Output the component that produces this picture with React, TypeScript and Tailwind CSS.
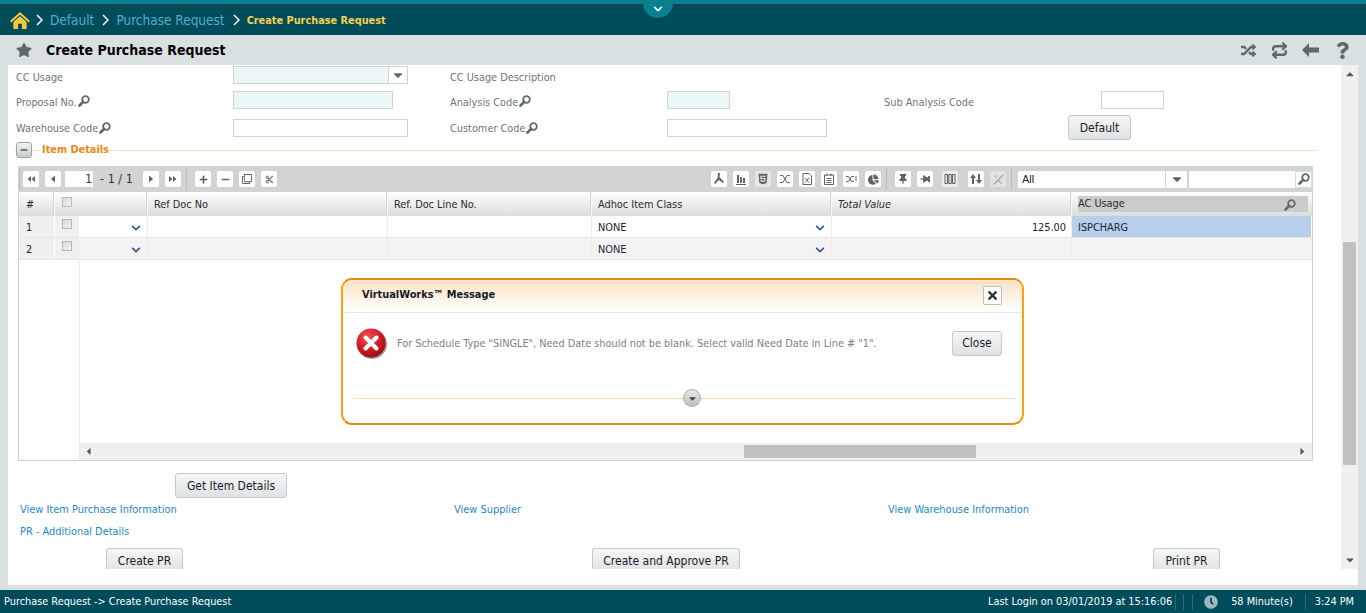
import React from "react";
import { FaStar, FaRandom, FaQuestion, FaHtml5, FaChartPie, FaThumbtack, FaPlus, FaMinus, FaRegClone, FaCut, FaChevronDown, FaCaretDown, FaCaretUp, FaCaretLeft, FaCaretRight, FaTimes, FaClock } from "react-icons/fa";
import { Repeat } from "lucide-react";

const KeySearch = ({ size = 12, className = "" }: { size?: number; className?: string }) => (
  <svg width={size} height={size} viewBox="0 0 12 12" className={className} fill="none" stroke="currentColor">
    <circle cx="7.500" cy="4.500" r="3.300" strokeWidth="1.800" />
    <path d="M5 7L1.500 10.500" strokeWidth="2.600" strokeLinecap="round" />
  </svg>
);

const Btn = ({ children, className = "" }: { children: React.ReactNode; className?: string }) => (
  <div className={"flex items-center justify-center rounded-[3px] border border-[#c4c9ca] bg-gradient-to-b from-[#f5f6f6] to-[#dfe2e3] text-[12px] text-[#1a1a2a] " + className}>{children}</div>
);

const Tool = ({ children, className = "" }: { children?: React.ReactNode; className?: string }) => (
  <div className={"flex h-4 w-4 shrink-0 items-center justify-center rounded-[2px] bg-white text-[#5f6366] " + className}>{children}</div>
);

const Sep = () => <div className="h-[22px] w-px shrink-0 bg-[#bcbcbc]" />;

const Glyph = ({ d, fill = false }: { d: string; fill?: boolean }) => (
  <svg width="14" height="14" viewBox="0 0 14 14" fill={fill ? "currentColor" : "none"} stroke={fill ? "none" : "currentColor"} strokeWidth="1"><path d={d} /></svg>
);

const Crumb = () => (
  <svg width="7" height="12" viewBox="0 0 7 12" fill="none" stroke="#fff" strokeWidth="1.500" className="shrink-0"><path d="M1 1l5 5-5 5" /></svg>
);

const Check = () => <div className="h-[10px] w-[10px] border border-[#b5b5b5] bg-gradient-to-br from-[#d8d8d8] to-[#f4f4f4]" />;

const Chevron = () => <FaChevronDown size={10} className="text-[#2f5687]" />;

const columns = "grid grid-cols-[36px_24px_69px_240px_204px_240px_240px_239px]";

const Toolbar = () => (
  <div className="flex h-[26px] items-center bg-[#d3d3d3] pl-px text-[#333]">
    <Sep />
    <Tool className="ml-[3px]"><Glyph fill d="M7 4v6L3.500 7zM11 4v6L7.500 7z" /></Tool>
    <Tool className="ml-[6px]"><Glyph fill d="M9 3.500v7L5 7z" /></Tool>
    <div className="ml-1 flex h-4 w-[28px] items-center justify-end bg-white pr-px text-[12px]">1</div>
    <span className="ml-[7px] w-[34px] shrink-0 whitespace-nowrap text-[12.5px]">- 1 / 1</span>
    <Tool className="ml-[9px]"><Glyph fill d="M5 3.500v7L9 7z" /></Tool>
    <Tool className="ml-[6px]"><Glyph fill d="M3 4v6L6.500 7zM7 4v6L10.500 7z" /></Tool>
    <div className="ml-[5px]"><Sep /></div>
    <Tool className="ml-2"><FaPlus size={9} /></Tool>
    <Tool className="ml-[6px]"><FaMinus size={9} /></Tool>
    <Tool className="ml-[6px]"><FaRegClone size={10} /></Tool>
    <Tool className="ml-[6px]"><FaCut size={9} className="text-[#8a8a8a]" /></Tool>
    <div className="w-[434px] shrink-0" />
    <Tool><Glyph fill d="M6 1h2l-.5 4L12 10l-1 1-4-3-4 4-1-1 3.500-5z" /></Tool>
    <Tool className="ml-[6px]"><Glyph fill d="M3 3h2v8H3zM6 5h2v6H6zM9 6h2v5H9zM2 12h10v1H2z" /></Tool>
    <Tool className="ml-[6px] !bg-[#e6e6e6]"><FaHtml5 size={12} /></Tool>
    <Tool className="ml-[6px]"><Glyph d="M2 3.500h3l4 7h3M2 10.500h3l4-7h3" /></Tool>
    <Tool className="ml-[6px]"><Glyph d="M3 1.500h6l2.500 2.500v8.500H3zM5 6l4 4.500M9 6l-4 4.500" /></Tool>
    <Tool className="ml-[6px]"><Glyph d="M2.500 3h9v9.500h-9zM5 1.500v2.500M9 1.500v2.500M4.500 6.500h5M4.500 8.500h5M4.500 10.500h5" /></Tool>
    <Tool className="ml-[6px]"><Glyph d="M2 4.500h2.500l3 5H10M2 9.500h2.500l3-5H10M12 4v5" /></Tool>
    <Tool className="ml-[6px]"><FaChartPie size={11} /></Tool>
    <div className="ml-[5px]"><Sep /></div>
    <Tool className="ml-2"><FaThumbtack size={10} /></Tool>
    <Tool className="ml-[6px]"><FaThumbtack size={10} className="rotate-90" /></Tool>
    <Tool className="ml-[9px] !bg-[#ececec]"><Glyph d="M2 2.500h2.500v9H2zM5.800 2.500h2.500v9H5.800zM9.500 2.500H12v9H9.500z" /></Tool>
    <Tool className="ml-[10px]"><Glyph fill d="M4 2l3 4H5v6H3V6H1zM10 12l-3-4h2V2h2v6h2z" /></Tool>
    <Tool className="ml-[6px] !bg-[#e2e2e2] !text-[#a9a9a9]"><Glyph fill d="M2 12L12 2l1 1L3 13zM4 3l2 2-1 1-2-2zM8 8l3 3-1 1-3-3z" /></Tool>
    <div className="ml-[5px]"><Sep /></div>
    <div className="ml-[6px] flex h-[17px] w-[169px] items-center justify-between bg-white pl-1 text-[11px] text-[#222]">
      <span className="font-['Liberation_Sans',sans-serif]">All</span>
      <div className="flex h-full w-[22px] items-center justify-center border-l border-[#d3d3d3]"><FaCaretDown size={14} className="text-[#5f6366]" /></div>
    </div>
    <div className="ml-[2px] h-[17px] w-[106px] bg-white" />
    <div className="flex h-[17px] w-[17px] items-center justify-center border border-[#c4e3ee] bg-white"><KeySearch size={12} className="text-[#666]" /></div>
  </div>
);

const Header = () => {
  const cell = "flex items-center pl-[6px] pt-[3px] border-r border-[#f8f8f8] shadow-[inset_-1px_0_0_#d4d4d4] text-[#2a2a2a]";
  return (
    <div className={columns + " h-6 bg-gradient-to-b from-[#fefefe] to-[#dddddd] text-[10.85px]"}>
      <div className={cell + " pl-[7px]"}>#</div>
      <div className="col-span-2 flex border-r border-[#f8f8f8] pl-[7px] pt-[5px] shadow-[inset_-1px_0_0_#d4d4d4]"><div className="h-[10px] w-[10px] border border-[#bbb] bg-gradient-to-br from-[#d8d8d8] to-[#f4f4f4]" /></div>
      <div className={cell}>Ref Doc No</div>
      <div className={cell}>Ref. Doc Line No.</div>
      <div className={cell}>Adhoc Item Class</div>
      <div className={cell + " italic"}>Total Value</div>
      <div className="flex items-center py-[4px] pl-[6px] pr-[3px]">
        <div className="flex h-4 flex-1 items-center justify-between bg-[#cccccc] pr-[12px] pt-px text-[#2a2a2a]">AC Usage<KeySearch size={12} className="text-[#666]" /></div>
      </div>
    </div>
  );
};

const Row = ({ n, value, ac, even }: { n: string; value?: string; ac?: string; even?: boolean }) => {
  const cell = "flex items-center border-r border-[#ececec] pt-[3px]";
  return (
    <div className={columns + " h-[22px] border-b border-[#e6e6e6] text-[10.85px] text-[#1d2333] " + (even ? "bg-[#f3f3f3]" : "bg-white")}>
      <div className="flex items-center border-r border-white bg-[#f0f0f0] pl-[7px] pt-[3px]">{n}</div>
      <div className="flex justify-center bg-[#f0f0f0] pt-[3px]"><Check /></div>
      <div className={cell + " justify-end pr-[6px]"}><Chevron /></div>
      <div className={cell} />
      <div className={cell} />
      <div className={cell + " justify-between pl-[6px] pr-[6px]"}>NONE<Chevron /></div>
      <div className={cell + " justify-end pr-[5px]"}>{value}</div>
      <div className={"flex items-center pl-[6px] pt-[3px] " + (ac ? "bg-[#b8cfec]" : "")}>{ac}</div>
    </div>
  );
};

const Field = ({ className = "" }: { className?: string }) => <div className={"h-[18px] border border-[#cfd3d4] " + className} />;

const formCols = "grid grid-cols-[217px_217px_217px_217px_217px_217px] items-center pl-2 text-[10.85px] text-[#6d757b]";
const label = "flex h-[18px] items-center gap-px pt-[6px]";
const labelLow = "flex h-[18px] items-center gap-px pt-[4px]";

const Modal = () => (
  <div className="absolute left-[341px] top-[278px] flex h-[147px] w-[683px] flex-col overflow-hidden rounded-[11px] border-2 border-x-[#f9a20e] border-y-[#e38a17] bg-white">
    <div className="flex h-[33px] shrink-0 items-start justify-between border-b border-[#e6e6e6] bg-gradient-to-b from-[#fde2c4] to-white pl-[19px] pr-[20px]">
      <span className="mt-[7px] text-[10.9px] font-bold text-[#111a2a]">VirtualWorks™ Message</span>
      <div className="mt-[6px] flex h-[19px] w-[19px] items-center justify-center rounded-[2px] border border-[#bcbcbc] bg-white"><FaTimes size={13} className="text-[#333]" /></div>
    </div>
    <div className="flex h-[60px] shrink-0 items-center pl-[13px] pr-[20px]">
      <svg width="31" height="31" viewBox="0 0 31 31" className="shrink-0">
        <defs>
          <radialGradient id="er" cx="40%" cy="30%" r="75%"><stop offset="0" stopColor="#f0525a" /><stop offset="0.6" stopColor="#d01a22" /><stop offset="1" stopColor="#8c0f12" /></radialGradient>
        </defs>
        <circle cx="16" cy="16" r="15" fill="#333" opacity="0.5" />
        <circle cx="15" cy="15" r="14.500" fill="url(#er)" />
        <path d="M9.500 9.500l11 11M20.500 9.500l-11 11" stroke="#fff" strokeWidth="4" strokeLinecap="round" />
      </svg>
      <span className="ml-[10px] flex-1 whitespace-nowrap pt-[2px] text-[10.85px] text-[#7a8288]">For Schedule Type "SINGLE", Need Date should not be blank. Select valid Need Date in Line # "1".</span>
      <Btn className="h-[25px] w-[50px]">Close</Btn>
    </div>
    <div className="relative mt-[25px] ml-[11px] mr-[7px] h-px bg-[#ffdda8]">
      <div className="absolute left-[329px] top-[-9px] flex h-[18px] w-[18px] items-center justify-center rounded-full border border-[#aeaeae] bg-gradient-to-b from-[#e8e8e8] to-[#bdbdbd]"><FaCaretDown size={11} className="text-[#444]" /></div>
    </div>
  </div>
);

export default function App() {
  return (
    <div className="relative flex h-[613px] w-[1366px] flex-col overflow-hidden bg-[#d8e0e2] font-['DejaVu_Sans_Condensed','DejaVu_Sans',sans-serif]">
      <div className="h-1 shrink-0 bg-[#08808f]" />
      <div className="h-px shrink-0 bg-[#1e3f4c]" />
      <div className="flex h-[30px] shrink-0 items-center bg-[#004c5b] pl-[9px]">
        <svg width="22" height="19" viewBox="0 0 23 20" className="shrink-0">
          <path d="M11.500 1L1 10.500l1.300 1.500L11.500 4l9.200 8L22 10.500z" fill="#f7c948" />
          <path d="M4.500 11.500L11.500 5.500l7 6V19h-5v-5.500h-4V19h-5z" fill="#f6c93f" />
        </svg>
        <div className="ml-[5px]"><Crumb /></div>
        <span className="ml-[7px] pt-px text-[13.5px] text-[#4fb0c8]">Default</span>
        <div className="ml-2"><Crumb /></div>
        <span className="ml-[7px] pt-px text-[13.5px] text-[#4fb0c8]">Purchase Request</span>
        <div className="ml-2"><Crumb /></div>
        <span className="ml-[7px] pt-[2px] text-[10.85px] font-bold text-[#f7cf50]">Create Purchase Request</span>
      </div>
      <div className="absolute left-[643px] top-0 flex h-[18px] w-[30px] items-center justify-center rounded-b-[15px] bg-[#08808f]"><FaChevronDown size={10} className="text-white" /></div>
      <div className="flex h-[30px] shrink-0 items-center pl-4 pr-[15px]">
        <FaStar size={16} className="text-[#5f6770]" />
        <span className="ml-[14px] pt-px text-[14px] font-bold text-black">Create Purchase Request</span>
        <div className="ml-auto flex items-center text-[#5f6770]">
          <FaRandom size={15} />
          <Repeat size={17} strokeWidth={3.200} className="ml-[15px]" />
          <svg width="17" height="14" viewBox="0 0 17 14" fill="currentColor" className="ml-[14px]"><path d="M7 0v4.500h10v5H7V14L0 7z" /></svg>
          <FaQuestion size={17} className="ml-[15px]" />
        </div>
      </div>
      <div className="flex min-h-0 flex-1 pb-[5px] pl-2 pr-2">
        <div className="min-w-0 flex-1 bg-white">
          <div className="flex h-[504px]">
            <div className="min-w-0 flex-1 overflow-hidden">
              <div className={formCols + " mt-px"}>
                <span className={label}>CC Usage</span>
                <div className="flex h-[18px] w-[175px] border border-[#cfd3d4] bg-[#ebf6f6]">
                  <div className="flex-1" />
                  <div className="flex w-[19px] items-center justify-center border-l border-[#cfd3d4] bg-white"><FaCaretDown size={14} className="text-[#5f6770]" /></div>
                </div>
                <span className={label}>CC Usage Description</span>
              </div>
              <div className={formCols + " mt-[7px]"}>
                <span className={label}>Proposal No.<KeySearch size={12} className="-mt-[5px] text-[#5f6770]" /></span>
                <Field className="w-[160px] bg-[#ebf6f6]" />
                <span className={label}>Analysis Code<KeySearch size={12} className="-mt-[5px] text-[#5f6770]" /></span>
                <Field className="w-[63px] bg-[#ebf6f6]" />
                <span className={label}>Sub Analysis Code</span>
                <Field className="w-[63px]" />
              </div>
              <div className={formCols + " mt-[6px] h-[25px]"}>
                <span className={labelLow}>Warehouse Code<KeySearch size={12} className="-mt-[3px] text-[#5f6770]" /></span>
                <Field className="w-[175px]" />
                <span className={labelLow}>Customer Code<KeySearch size={12} className="-mt-[3px] text-[#5f6770]" /></span>
                <Field className="w-[160px]" />
                <Btn className="ml-[184px] h-[25px] w-[63px]">Default</Btn>
              </div>
              <div className="ml-[6px] mt-[2px] flex h-4 w-[1304px] items-center">
                <div className="h-px w-[2px] bg-[#fbe3c2]" />
                <div className="flex h-4 w-4 items-center justify-center rounded-[3px] border border-[#9da3a5] bg-gradient-to-b from-[#f0f0f0] to-[#c9cdce]"><FaMinus size={8} className="text-[#555]" /></div>
                <div className="h-px w-2 bg-[#fbe3c2]" />
                <span className="ml-[2px] text-[10.85px] font-bold text-[#e98a13]">Item Details</span>
                <div className="h-px flex-1 bg-[#fbe3c2]" />
              </div>
              <div className="ml-[10px] mt-2 w-[1295px]">
                <Toolbar />
                <div className="flex h-[269px] flex-col border-x border-b border-[#cfcfcf] bg-white">
                  <Header />
                  <Row n="1" value="125.00" ac="ISPCHARG" />
                  <Row n="2" even />
                  <div className="flex min-h-0 flex-1">
                    <div className="w-[61px] shrink-0 border-r border-[#ececec]" />
                    <div className="flex min-w-0 flex-1 flex-col justify-end">
                      <div className="flex h-[17px] items-center justify-between bg-[#f0f0f0] pl-[3px] pr-[4px]">
                        <FaCaretLeft size={11} className="text-[#555]" />
                        <div className="ml-[650px] mr-auto h-[13px] w-[232px] bg-[#c1c1c1]" />
                        <FaCaretRight size={11} className="text-[#555]" />
                      </div>
                    </div>
                  </div>
                </div>
              </div>
              <Btn className="ml-[167px] mt-3 h-[25px] w-[112px]">Get Item Details</Btn>
              <div className="mt-px grid grid-cols-[434px_434px_434px] pl-3 text-[10.95px] text-[#1e88c7]">
                <span className="leading-[22px]">View Item Purchase Information</span>
                <span className="leading-[22px]">View Supplier</span>
                <span className="leading-[22px]">View Warehouse Information</span>
              </div>
              <div className="pl-3 text-[10.95px] leading-[22px] text-[#1e88c7]">PR - Additional Details</div>
              <div className="mt-[5px] flex h-[25px] pl-[98px]">
                <Btn className="w-[77px]">Create PR</Btn>
                <Btn className="ml-[409px] w-[148px]">Create and Approve PR</Btn>
                <Btn className="ml-[413px] w-[67px]">Print PR</Btn>
              </div>
            </div>
            <div className="flex w-[17px] shrink-0 flex-col items-center bg-[#f0f0f0]">
              <FaCaretUp size={12} className="mt-[3px] text-[#555]" />
              <div className="mt-[162px] h-[223px] w-[13px] bg-[#c1c1c1]" />
              <FaCaretDown size={12} className="mt-auto mb-[3px] text-[#555]" />
            </div>
          </div>
        </div>
      </div>
      <div className="flex h-[23px] shrink-0 items-center bg-[#004c5b] pl-1 pr-3 text-[10.85px] text-white">
        <span className="pt-[2px]">Purchase Request -&gt; Create Purchase Request</span>
        <span className="ml-auto pt-[2px]">Last Login on 03/01/2019 at 15:16:06</span>
        <div className="ml-[3px] h-4 w-px bg-[#2a6c7a]" />
        <div className="ml-[7px] h-4 w-px bg-[#2a6c7a]" />
        <div className="ml-[8px] h-4 w-px bg-[#2a6c7a]" />
        <FaClock size={14} className="ml-[11px] mt-px text-[#9db8c0]" />
        <span className="ml-[13px] pt-[2px]">58 Minute(s)</span>
        <div className="ml-[12px] h-4 w-px bg-[#2a6c7a]" />
        <span className="ml-[9px] pt-[2px]">3:24 PM</span>
      </div>
      <Modal />
    </div>
  );
}
